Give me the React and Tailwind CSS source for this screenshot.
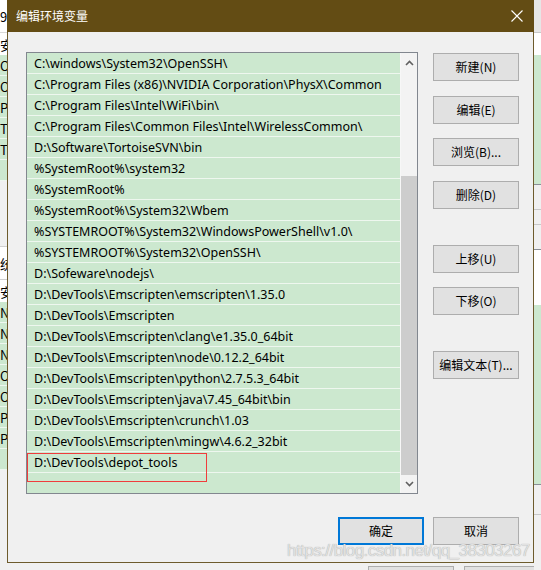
import React from 'react';

const paths = [
  'C:\\windows\\System32\\OpenSSH\\',
  'C:\\Program Files (x86)\\NVIDIA Corporation\\PhysX\\Common',
  'C:\\Program Files\\Intel\\WiFi\\bin\\',
  'C:\\Program Files\\Common Files\\Intel\\WirelessCommon\\',
  'D:\\Software\\TortoiseSVN\\bin',
  '%SystemRoot%\\system32',
  '%SystemRoot%',
  '%SystemRoot%\\System32\\Wbem',
  '%SYSTEMROOT%\\System32\\WindowsPowerShell\\v1.0\\',
  '%SYSTEMROOT%\\System32\\OpenSSH\\',
  'D:\\Sofeware\\nodejs\\',
  'D:\\DevTools\\Emscripten\\emscripten\\1.35.0',
  'D:\\DevTools\\Emscripten',
  'D:\\DevTools\\Emscripten\\clang\\e1.35.0_64bit',
  'D:\\DevTools\\Emscripten\\node\\0.12.2_64bit',
  'D:\\DevTools\\Emscripten\\python\\2.7.5.3_64bit',
  'D:\\DevTools\\Emscripten\\java\\7.45_64bit\\bin',
  'D:\\DevTools\\Emscripten\\crunch\\1.03',
  'D:\\DevTools\\Emscripten\\mingw\\4.6.2_32bit',
  'D:\\DevTools\\depot_tools',
];

const sideButtons = [
  { label: '新建(N)', mt: 'mt-0' },
  { label: '编辑(E)', mt: 'mt-[15px]' },
  { label: '浏览(B)...', mt: 'mt-[14px]' },
  { label: '删除(D)', mt: 'mt-[15px]' },
  { label: '上移(U)', mt: 'mt-[36px]' },
  { label: '下移(O)', mt: 'mt-[14px]' },
  { label: '编辑文本(T)...', mt: 'mt-[36px]' },
];

const cjk = "font-['Microsoft_YaHei','Noto_Sans_CJK_SC',sans-serif]";

// 按钮
const WinButton = ({ children, primary, className = '' }) => (
  <div
    className={`flex items-center justify-center w-[86px] h-[28px] bg-[#e1e1e1] text-[12px] text-black ${cjk} ${
      primary ? 'border-2 border-[#0078d7]' : 'border border-[#adadad]'
    } ${className}`}
  >
    {children}
  </div>
);

const Chevron = ({ down }) => (
  <svg width="9" height="6" viewBox="0 0 9 6">
    <polyline
      points={down ? '1,1 4.5,4.5 8,1' : '1,5 4.5,1.5 8,5'}
      fill="none"
      stroke="#606060"
      strokeWidth="1.6"
    />
  </svg>
);

// 背后窗口的左边一条
const LeftStrip = () => {
  const topRows = ['O', 'O', 'Pa', 'TE', 'TN', ''];
  const botRows = ['N', 'N', 'N', 'O', 'O', 'Pa', 'PA', ''];
  return (
    <div className={`flex flex-col w-[7px] shrink-0 overflow-hidden text-[13px] leading-none text-black ${cjk}`}>
      <div className="h-[33px] bg-white border-b border-[#d9d9d9] flex items-center">9</div>
      <div className="h-[22px] bg-white flex items-center">安</div>
      {topRows.map((t, i) => (
        <div key={i} className="h-[21px] bg-[#cce8cf] border-b border-[#eef7ef] flex items-center">{t}</div>
      ))}
      <div className="h-[66px] bg-[#f0f0f0] border-b border-[#d0d0d0]" />
      <div className="h-[33px] bg-white border-b border-[#d0d0d0] flex items-center">统</div>
      <div className="h-[22px] bg-white flex items-center">安</div>
      {botRows.map((t, i) => (
        <div key={i} className="h-[21px] bg-[#cce8cf] border-b border-[#eef7ef] flex items-center">{t}</div>
      ))}
      <div className="flex-1 bg-[#f0f0f0]" />
    </div>
  );
};

// 背后窗口的右边一条
const RightStrip = () => (
  <div className="flex flex-col flex-1 overflow-hidden">
    <div className="h-[33px] bg-[#e6e6e6] border-b border-[#c8c8c8]" />
    <div className="h-[22px] bg-white" />
    <div className="h-[130px] bg-[#cce8cf] border-b border-[#8a8f96]" />
    <div className="h-[25px] bg-[#f0f0f0] border-b border-[#c8c8c8]" />
    <div className="h-[15px] bg-[#f0f0f0] border-b border-[#c8c8c8]" />
    <div className="h-[25px] bg-[#f0f0f0] border-b border-[#8a8f96]" />
    <div className="h-[55px] bg-white" />
    <div className="h-[180px] bg-[#cce8cf] border-b border-[#8a8f96]" />
    <div className="h-[30px] bg-[#f0f0f0] border-b border-[#c8c8c8]" />
    <div className="flex-1 bg-[#f0f0f0]" />
  </div>
);

const Dialog = () => (
  <div className="relative flex flex-col h-[563px] bg-[#f0f0f0] border border-[#6d5b2c] border-t-0">
    {/* 标题栏 */}
    <div className="flex items-center justify-between h-[32px] bg-[#634c14] -mx-px pl-[9px] pr-[10px]">
      <span className={`text-[12px] text-white ${cjk}`}>编辑环境变量</span>
      <svg width="14" height="14" viewBox="0 0 14 14">
        <path d="M1.5 1.5 L12.5 12.5 M12.5 1.5 L1.5 12.5" stroke="#fff" strokeWidth="1.1" />
      </svg>
    </div>

    {/* 内容 */}
    <div className="flex pl-[18px] pt-[20px]">
      <div className="relative flex w-[392px] h-[442px] border border-[#82878f] bg-[#cce8cf]">
        <div className="flex-1 min-w-0 overflow-hidden flex flex-col">
          {paths.map((p) => (
            <div
              key={p}
              className="h-[21px] shrink-0 flex items-center pl-[7px] pt-[2px] border-b border-[#eef7ef] text-[12.5px] text-black whitespace-nowrap font-['Segoe_UI','Noto_Sans',sans-serif]"
            >
              {p}
            </div>
          ))}
        </div>
        {/* 滚动条 */}
        <div className="w-[17px] shrink-0 flex flex-col bg-[#f3f3f3] border-l border-[#f7f7f7]">
          <div className="h-[19px] flex items-center justify-center">
            <Chevron />
          </div>
          <div className="h-[104px]" />
          <div className="h-[299px] bg-[#cdcdcd]" />
          <div className="flex-1 flex items-center justify-center">
            <Chevron down />
          </div>
        </div>
        {/* 红框标注 */}
        <div className="absolute left-0 top-[400px] w-[180px] h-[29px] border border-[#f03c3c]" />
      </div>

      <div className="flex flex-col ml-[15px] mt-px">
        {sideButtons.map((b) => (
          <WinButton key={b.label} className={b.mt}>
            {b.label}
          </WinButton>
        ))}
      </div>
    </div>

    {/* 底部按钮 */}
    <div className="flex justify-end gap-[9px] pr-[14px] mt-[23px]">
      <WinButton primary>确定</WinButton>
      <WinButton>取消</WinButton>
    </div>

    {/* 水印 */}
    <div className="absolute left-[279px] top-[542px] text-[17px] leading-none tracking-[-0.55px] text-[#e2e2e2] font-['Liberation_Sans',sans-serif] [text-shadow:0_0_1px_#9a9a9a]">
      https://blog.csdn.net/qq_38303267
    </div>
  </div>
);

export default function App() {
  return (
    <div className="flex w-[541px] h-[570px] overflow-hidden bg-[#f0f0f0]">
      <LeftStrip />
      <div className="flex flex-col w-[527px] shrink-0">
        <Dialog />
        <div className="flex-1 flex gap-[10px] pl-[361px] bg-[#f0f0f0]">
          <div className="w-[86px] shrink-0 border border-[#adadad] border-b-0 bg-[#e1e1e1] mt-[3px]" />
          <div className="flex-1 border border-[#adadad] border-b-0 border-r-0 bg-[#e1e1e1] mt-[3px]" />
        </div>
      </div>
      <RightStrip />
    </div>
  );
}
